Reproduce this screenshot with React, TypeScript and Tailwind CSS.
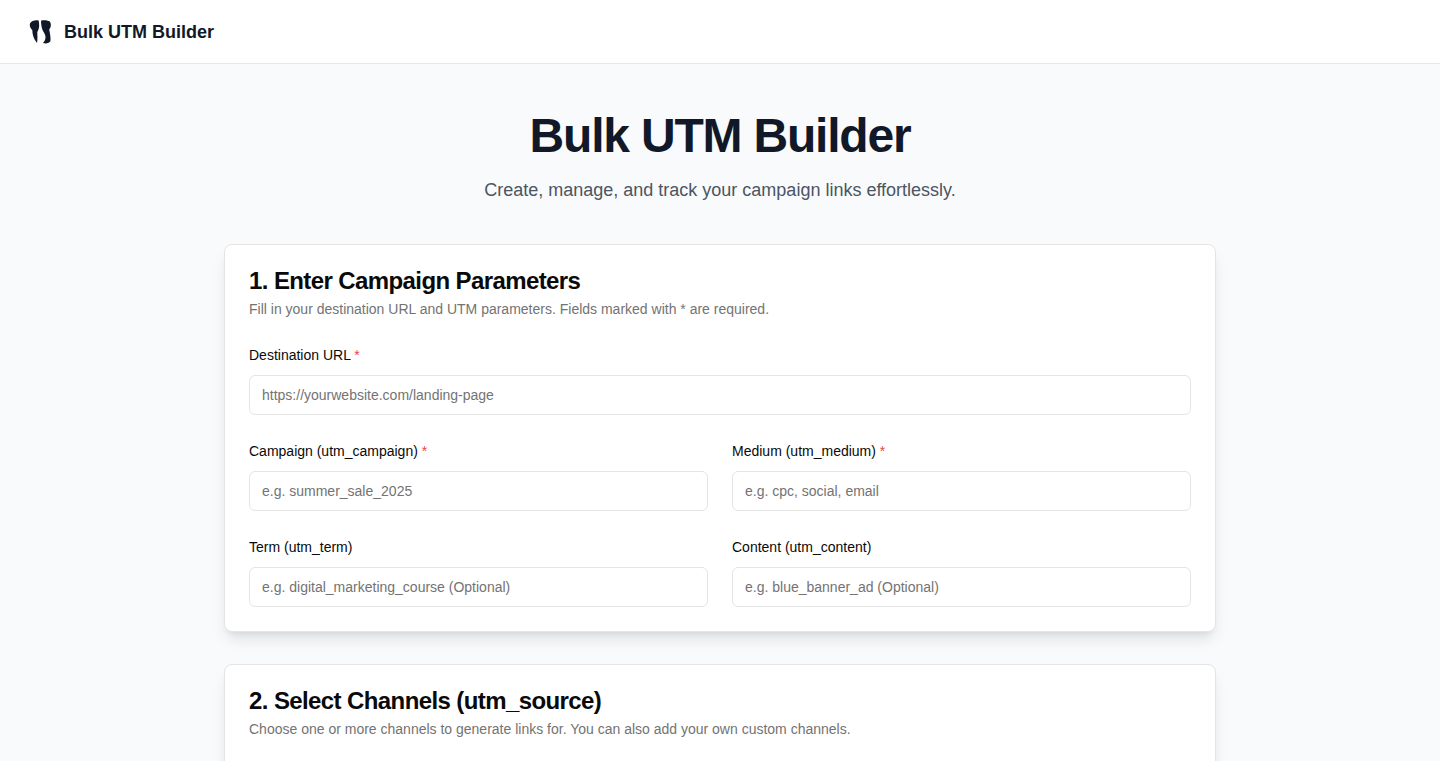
const Req = () => <span className="text-[#ef4444]"> *</span>;

const Field = ({ label, placeholder, required }: { label: string; placeholder: string; required?: boolean }) => (
  <div className="flex flex-col gap-2">
    <label className="text-sm leading-6 font-medium text-[#0a0a0a]">
      {label}
      {required && <Req />}
    </label>
    <input
      placeholder={placeholder}
      className="h-10 w-full rounded-md border border-[#e5e5e5] bg-white px-3 text-sm text-[#0a0a0a] outline-none placeholder:text-[#737373]"
    />
  </div>
);

const Logo = () => (
  <svg width="24" height="24" viewBox="0 0 24 24" className="text-[#111827]" fill="currentColor">
    <path d="M10.6 .4 C7 -.2 3.5 .8 2 3.5 C1.3 6 2.5 8.5 4.3 10 C4.3 14 5.5 19 9 23 C9.8 19 9.3 15 9.3 12 C11 9 11.8 6 10.6 .4 Z" />
    <path d="M13 .7 C16 -.2 20 .3 22 1.7 C23.3 4 23.2 7 21.2 9.5 C21.9 13 23 18 22.3 21.5 C20.5 23.5 17.5 23.8 15 23 C16.5 21.5 17.6 20 17.5 17 C17.4 14.5 16 12.5 15 11 C13.6 8 13 4 13 .7 Z" />
  </svg>
);

export default function App() {
  return (
    <div className="h-screen overflow-hidden bg-[#f9fafb] font-['Liberation_Sans',Arial,sans-serif]">
      <header className="flex h-16 items-center gap-3 border-b border-[#e5e7eb] bg-white px-7">
        <Logo />
        <span className="text-lg font-bold text-[#111827]">Bulk UTM Builder</span>
      </header>
      <main className="mx-auto flex w-[992px] flex-col pt-12">
        <div className="mb-10 flex flex-col items-center gap-4">
          <h1 className="text-5xl leading-none font-bold tracking-tight text-[#111827]">Bulk UTM Builder</h1>
          <p className="text-lg leading-7 text-[#4b5563]">Create, manage, and track your campaign links effortlessly.</p>
        </div>
        <section className="mb-8 rounded-lg border border-[#e5e5e5] bg-white p-6 shadow-lg shadow-black/10">
          <h2 className="text-2xl leading-6 font-semibold tracking-tight text-[#0a0a0a]">1. Enter Campaign Parameters</h2>
          <p className="mt-1.5 text-sm leading-5 text-[#737373]">Fill in your destination URL and UTM parameters. Fields marked with * are required.</p>
          <div className="mt-6 flex flex-col gap-6">
            <Field label="Destination URL" placeholder="https://yourwebsite.com/landing-page" required />
            <div className="grid grid-cols-2 gap-6">
              <Field label="Campaign (utm_campaign)" placeholder="e.g. summer_sale_2025" required />
              <Field label="Medium (utm_medium)" placeholder="e.g. cpc, social, email" required />
              <Field label="Term (utm_term)" placeholder="e.g. digital_marketing_course (Optional)" />
              <Field label="Content (utm_content)" placeholder="e.g. blue_banner_ad (Optional)" />
            </div>
          </div>
        </section>
        <section className="rounded-lg border border-[#e5e5e5] bg-white p-6 pb-40 shadow-lg shadow-black/10">
          <h2 className="text-2xl leading-6 font-semibold tracking-tight text-[#0a0a0a]">2. Select Channels (utm_source)</h2>
          <p className="mt-1.5 text-sm leading-5 text-[#737373]">Choose one or more channels to generate links for. You can also add your own custom channels.</p>
        </section>
      </main>
    </div>
  );
}
